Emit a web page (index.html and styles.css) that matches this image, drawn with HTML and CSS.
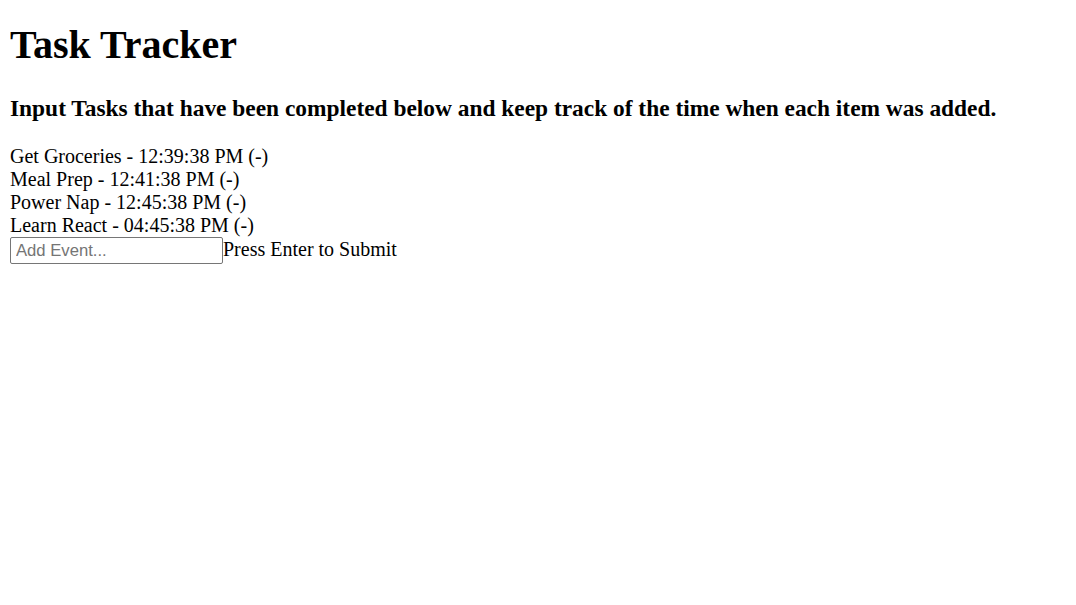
FILE: index.html
```html
<!DOCTYPE html>
<html>
<head>
<meta charset="utf-8">
<title>Task Tracker</title>
<link rel="stylesheet" href="styles.css">
</head>
<body class="page">
<h1 class="title">Task Tracker</h1>
<h3 class="subtitle">Input Tasks that have been completed below and keep track of the time when each item was added.</h3>
<div class="tasks">
  <div class="task">Get Groceries - 12:39:38 PM (-)</div>
  <div class="task">Meal Prep - 12:41:38 PM (-)</div>
  <div class="task">Power Nap - 12:45:38 PM (-)</div>
  <div class="task">Learn React - 04:45:38 PM (-)</div>
</div>
<form class="entry">
  <input class="entry-input" type="text" placeholder="Add Event..."><span class="entry-hint">Press Enter to Submit</span>
</form>
</body>
</html>
```

FILE: styles.css
```css
html {
  background: #fff;
}
.page {
  margin: 10px;
  font-family: "Liberation Serif", "Times New Roman", serif;
  font-size: 20px;
  color: #000;
}
.title {
  font-size: 40px;
  font-weight: bold;
  margin: 11px 0 26.8px;
}
.subtitle {
  font-size: 23.4px;
  font-weight: bold;
  margin: 23.4px 0;
}
.tasks {
  margin: 0;
}
.task {
  line-height: normal;
}
.entry {
  margin: 0;
}
.entry-input {
  box-sizing: border-box;
  width: 213px;
  height: 27px;
  margin: 0;
  padding: 1px 5px;
  border: 1px solid #767676;
  border-radius: 2px;
  font-family: "Liberation Sans", Arial, sans-serif;
  font-size: 16.67px;
  color: #000;
  vertical-align: baseline;
}
.entry-input::placeholder {
  color: #757575;
}
```
